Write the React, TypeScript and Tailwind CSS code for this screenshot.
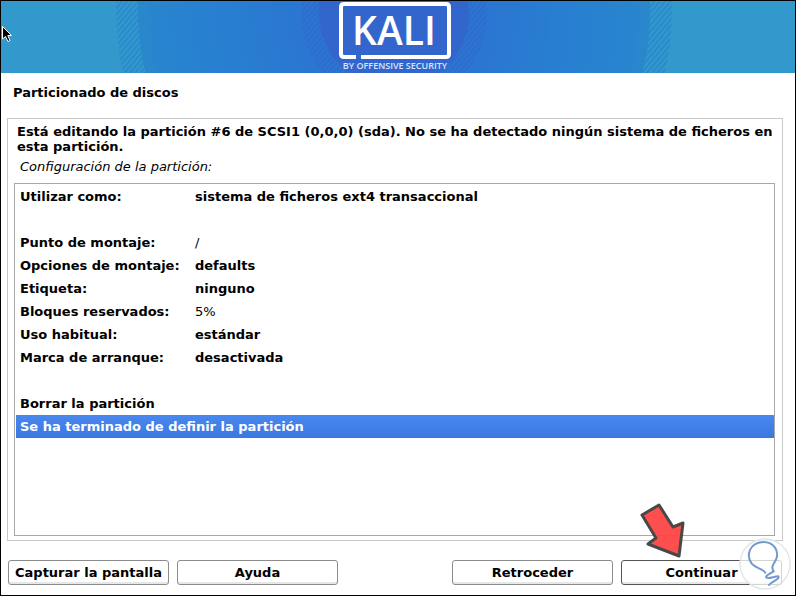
import React, { useState } from 'react';

interface Setting {
  label: string;
  value?: string;
}

const settings: Setting[] = [
  { label: 'Utilizar como:', value: 'sistema de ficheros ext4 transaccional' },
  { label: '' },
  { label: 'Punto de montaje:', value: '/' },
  { label: 'Opciones de montaje:', value: 'defaults' },
  { label: 'Etiqueta:', value: 'ninguno' },
  { label: 'Bloques reservados:', value: '5%' },
  { label: 'Uso habitual:', value: 'estándar' },
  { label: 'Marca de arranque:', value: 'desactivada' },
  { label: '' },
  { label: 'Borrar la partición' },
  { label: 'Se ha terminado de definir la partición' },
];

const Banner: React.FC = () => (
  <header className="relative h-18 shrink-0 overflow-hidden bg-[#3399cc]">
    <svg className="block h-full w-full" viewBox="0 0 794 72" preserveAspectRatio="xMidYMid slice" role="img" aria-label="Kali by Offensive Security">
      <defs>
        <radialGradient id="glow" gradientUnits="userSpaceOnUse" cx="393" cy="12" r="278">
          <stop offset="0.35" stopColor="#2a76d0" />
          <stop offset="0.65" stopColor="#2880d0" />
          <stop offset="0.9" stopColor="#2987cc" />
        </radialGradient>
        <pattern id="outerHatch" width="4" height="4" patternUnits="userSpaceOnUse" patternTransform="rotate(40)">
          <rect width="2" height="4" fill="#2a8bcc" />
        </pattern>
        <pattern id="innerHatch" width="4" height="4" patternUnits="userSpaceOnUse" patternTransform="rotate(40)">
          <rect width="2" height="4" fill="#2e6ccd" />
        </pattern>
        <pattern id="softHatch" width="5" height="5" patternUnits="userSpaceOnUse" patternTransform="rotate(40)">
          <rect width="2" height="5" fill="#2580d8" opacity="0.4" />
        </pattern>
      </defs>
      <circle cx="393" cy="10" r="278" fill="url(#outerHatch)" />
      <circle cx="393" cy="10" r="256" fill="url(#glow)" />
      <circle cx="393" cy="10" r="200" fill="none" stroke="url(#softHatch)" strokeWidth="90" />
      <circle cx="393" cy="12" r="93" fill="url(#innerHatch)" />
      <circle cx="393" cy="12" r="75" fill="#3366cc" />

      {/* Logo */}
      <path d="M355 56H343Q340 56 340 53V6Q340 3 343 3H445Q448 3 448 6V53Q448 56 445 56H360" fill="none" stroke="#fff" strokeWidth="4" />
      <text x="393" y="44" textAnchor="middle" fill="#fff" fontFamily="'Open Sans', sans-serif" fontSize="39" fontWeight="600">KALI</text>
      <text x="394" y="68" textAnchor="middle" fill="#d6e6fa" fontFamily="'Open Sans', sans-serif" fontSize="9" fontWeight="600">BY OFFENSIVE SECURITY</text>
    </svg>
    <svg className="absolute left-0 top-6 h-[18px] w-3" viewBox="0 0 12 18" aria-hidden="true">
      <path d="M1.500 1.500V14L4.500 11.500L7 16.500L9 15.500L6.800 10.500H10.500Z" fill="#000" stroke="#fff" strokeWidth="1" />
    </svg>
  </header>
);

const RedArrow: React.FC = () => (
  <svg className="pointer-events-none absolute bottom-[25px] left-[19px] h-[58px] w-[46px]" viewBox="0 0 46 58" aria-hidden="true">
    <path d="M19 3L33 25L43 21L39 54L8 42L16 36L2 13Z" fill="#ff4545" fillOpacity="0.95" stroke="#484848" strokeWidth="3" strokeLinejoin="round" />
  </svg>
);

const BulbMark: React.FC = () => (
  <svg className="pointer-events-none absolute -right-[9px] -top-[22px] h-[52px] w-[52px]" viewBox="0 0 156 156" aria-hidden="true">
    <circle cx="78" cy="78" r="75" fill="#fff" fillOpacity="0.75" stroke="#dfe6e8" strokeWidth="4" />
    <path
      d="M79 104C72 91 52 93 38 77C22 55 28 15 72 12C107 12 120 40 112 62C106 77 94 85 104 100C96 106 84 110 81 117C82 126 108 114 118 115C124 124 98 129 90 141"
      fill="none"
      stroke="#7299d0"
      strokeWidth="6"
      strokeLinecap="round"
    />
  </svg>
);

interface ActionButtonProps {
  children: React.ReactNode;
  primary?: boolean;
}

const ActionButton: React.FC<ActionButtonProps> = ({ children, primary }) => (
  <button
    type="button"
    className={`h-[25px] w-[161px] rounded-[3px] border bg-white text-[13px] leading-4 font-bold shadow-[inset_0_-2px_0_#e6e8e8] ${primary ? 'border-[#555555]' : 'border-[#8c8c8c]'}`}
  >
    {children}
  </button>
);

const App: React.FC = () => {
  const [selected, setSelected] = useState(settings.length - 1);

  return (
    <div className="flex min-h-screen flex-col border border-black bg-white font-['DejaVu_Sans',sans-serif] text-[13px] leading-[15px] text-black">
      <Banner />

      <main className="flex flex-1 flex-col pr-3 pb-2.5 pl-1.5">
        <h1 className="px-1.5 pt-3 pb-[18px] font-bold">Particionado de discos</h1>

        <section className="flex flex-1 flex-col border border-[#c8c8c8] pt-[5px] pr-[7px] pb-1 pl-1.5">
          <p className="pl-[3px] font-bold">
            Está editando la partición #6 de SCSI1 (0,0,0) (sda). No se ha detectado ningún sistema de ficheros en esta partición.
          </p>
          <h2 className="px-1.5 pt-[5px] pb-[9px] italic">Configuración de la partición:</h2>

          <div className="flex-1 border border-[#a8a8a8] pt-px pl-px">
            <table className="w-full table-fixed border-collapse text-left">
              <colgroup>
                <col className="w-[175px]" />
                <col />
              </colgroup>
              <tbody>
                {settings.map((row, index) => (
                  <tr
                    key={index}
                    aria-selected={index === selected}
                    onClick={() => row.label && setSelected(index)}
                    className={`h-[23px] cursor-default ${index === selected ? 'bg-linear-to-b from-[#4a88ee] to-[#3878e0] text-white' : ''}`}
                  >
                    <th scope="row" colSpan={row.value ? 1 : 2} className="p-0 pl-1 font-bold whitespace-nowrap">
                      {row.label}
                    </th>
                    {row.value && (
                      <td className={`p-0 pl-1 ${/[a-z]/.test(row.value) ? 'font-bold' : ''}`}>{row.value}</td>
                    )}
                  </tr>
                ))}
              </tbody>
            </table>
          </div>
        </section>

        <footer className="flex justify-between pt-[19px] pl-px">
          <div className="flex gap-2">
            <ActionButton>Capturar la pantalla</ActionButton>
            <ActionButton>Ayuda</ActionButton>
          </div>
          <div className="flex gap-2 pr-px">
            <ActionButton>Retroceder</ActionButton>
            <div className="relative">
              <ActionButton primary>Continuar</ActionButton>
              <RedArrow />
              <BulbMark />
            </div>
          </div>
        </footer>
      </main>
    </div>
  );
};

export default App;
